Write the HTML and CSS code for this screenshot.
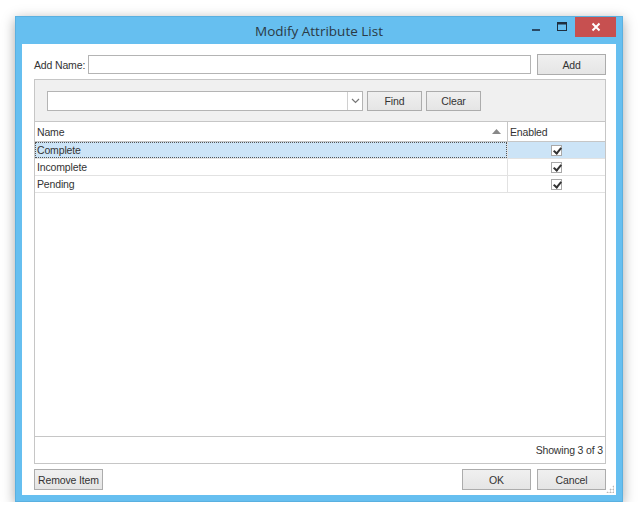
FILE: index.html
```html
<!DOCTYPE html>
<html>
<head>
<meta charset="utf-8">
<link rel="stylesheet" href="styles.css">
</head>
<body>
<div class="window">
  <div class="titlebar">
    <div class="title">Modify Attribute List</div>
    <div class="controls">
      <div class="ctl min"><svg width="12" height="12" viewBox="0 0 12 12"><rect x="2" y="8" width="8" height="2" fill="#2a4a66"/></svg></div>
      <div class="ctl max"><svg width="12" height="12" viewBox="0 0 12 12"><rect x="1.5" y="1.5" width="9" height="8" fill="none" stroke="#1f2f3f" stroke-width="1"/><rect x="1.5" y="1.5" width="9" height="2" fill="#1f2f3f"/></svg></div>
      <div class="ctl close"><svg width="12" height="12" viewBox="0 0 12 12"><path d="M2.5 2.5 L9.5 9.5 M9.5 2.5 L2.5 9.5" stroke="#fff" stroke-width="2"/></svg></div>
    </div>
  </div>
  <div class="content">
    <div class="addrow">
      <span class="label">Add Name:</span>
      <div class="textbox name-box"></div>
      <div class="btn add">Add</div>
    </div>
    <div class="panel">
      <div class="search">
        <div class="combo">
          <div class="combo-field"></div>
          <div class="combo-btn"><svg width="9" height="6" viewBox="0 0 9 6"><path d="M1 1 L4.5 4.5 L8 1" fill="none" stroke="#777" stroke-width="1.2"/></svg></div>
        </div>
        <div class="btn find">Find</div>
        <div class="btn clear">Clear</div>
      </div>
      <div class="grid">
        <div class="row header">
          <div class="cell name">Name<svg class="sort" width="9" height="5" viewBox="0 0 9 5"><path d="M0 5 L4.5 0 L9 5 Z" fill="#888"/></svg></div>
          <div class="cell enabled">Enabled</div>
        </div>
        <div class="row selected">
          <div class="cell name"><span class="focus">Complete</span></div>
          <div class="cell enabled"><span class="check"></span></div>
        </div>
        <div class="row">
          <div class="cell name">Incomplete</div>
          <div class="cell enabled"><span class="check"></span></div>
        </div>
        <div class="row">
          <div class="cell name">Pending</div>
          <div class="cell enabled"><span class="check"></span></div>
        </div>
      </div>
      <div class="footer">Showing 3 of 3</div>
    </div>
    <div class="bottom">
      <div class="btn remove">Remove Item</div>
      <div class="spacer"></div>
      <div class="btn ok">OK</div>
      <div class="btn cancel">Cancel</div>
    </div>
    <div class="grip"></div>
  </div>
</div>
</body>
</html>
```
FILE: styles.css
```css
html, body {
  margin: 0;
  padding: 0;
  background: #ffffff;
}
body {
  font-family: "Liberation Sans", Arial, sans-serif;
  font-size: 10.5px;
  letter-spacing: -0.15px;
  color: #333;
  padding: 16px 0 0 15px;
}
.window {
  width: 608px;
  height: 486px;
  box-sizing: border-box;
  background: #66bff0;
  border: 1px solid #5ab0e0;
  padding: 0 6px 6px 6px;
  display: flex;
  flex-direction: column;
  box-shadow: 0 3px 12px rgba(0,0,0,0.35);
}
.titlebar {
  height: 27px;
  position: relative;
  display: flex;
  justify-content: center;
  align-items: center;
  flex: none;
}
.title {
  font-family: "Open Sans", "Liberation Sans", sans-serif;
  font-size: 13.5px;
  letter-spacing: 0;
  color: #2b3a45;
  padding-top: 1px;
}
.controls {
  position: absolute;
  right: 0;
  top: 0;
  display: flex;
  height: 20px;
}
.ctl {
  display: flex;
  align-items: center;
  justify-content: center;
  height: 20px;
}
.min { width: 26px; }
.max { width: 26px; }
.close {
  width: 41px;
  background: #c75050;
}
.content {
  flex: 1;
  background: #fff;
  position: relative;
  padding: 10px 10px 0 12px;
  display: flex;
  flex-direction: column;
}
.addrow {
  display: flex;
  align-items: center;
  height: 21px;
}
.label {
  width: 54px;
  flex: none;
  white-space: nowrap;
  color: #333;
}
.textbox {
  border: 1px solid #b4b4b4;
  background: #fff;
  box-sizing: border-box;
}
.name-box {
  width: 443px;
  flex: none;
  height: 19px;
  margin-right: 6px;
}
.btn {
  box-sizing: border-box;
  height: 21px;
  flex: none;
  border: 1px solid #acacac;
  background: linear-gradient(#f0f0f0, #e5e5e5);
  display: flex;
  align-items: center;
  justify-content: center;
  color: #333;
}
.add { width: 69px; }
.panel {
  margin-top: 4px;
  width: 572px;
  height: 385px;
  box-sizing: border-box;
  border: 1px solid #c6c6c6;
  display: flex;
  flex-direction: column;
}
.search {
  height: 42px;
  background: #f0f0f0;
  border-bottom: 1px solid #c6c6c6;
  display: flex;
  align-items: flex-start;
  padding: 11px 0 0 12px;
  box-sizing: border-box;
  flex: none;
}
.combo {
  display: flex;
  width: 316px;
  height: 20px;
  box-sizing: border-box;
  border: 1px solid #b4b4b4;
  background: #fff;
  margin-right: 4px;
}
.combo-field { flex: 1; }
.combo-btn {
  width: 14px;
  border-left: 1px solid #d0d0d0;
  display: flex;
  align-items: center;
  justify-content: center;
}
.find { width: 55px; height: 20px; margin-right: 4px; }
.clear { width: 55px; height: 20px; }
.grid {
  flex: 1;
  background: #fff;
}
.row {
  display: flex;
  height: 17px;
  box-sizing: border-box;
  border-bottom: 1px solid #e2e2e2;
}
.row.header {
  height: 20px;
  border-bottom: 1px solid #c6c6c6;
}
.cell {
  display: flex;
  align-items: center;
  box-sizing: border-box;
  position: relative;
}
.cell.name {
  width: 473px;
  padding-left: 2px;
  border-right: 1px solid #e2e2e2;
}
.header .cell.name { border-right: 1px solid #c6c6c6; }
.cell.enabled {
  flex: 1;
  justify-content: center;
}
.header .cell.enabled {
  justify-content: flex-start;
  padding-left: 2px;
}
.sort {
  position: absolute;
  right: 6px;
  top: 7px;
}
.selected { background: #cce4f7; }
.selected .cell.name { padding-left: 0; }
.focus {
  display: flex;
  align-items: center;
  width: 100%;
  height: 100%;
  box-sizing: border-box;
  border: 1px dotted #555;
  padding-left: 1px;
}
.check {
  width: 11px;
  height: 11px;
  box-sizing: border-box;
  border: 1px solid #a8a8a8;
  background: #fff;
  position: relative;
}
.check::after {
  content: "";
  position: absolute;
  left: 3px;
  top: 0px;
  width: 3px;
  height: 6px;
  border-right: 2px solid #333;
  border-bottom: 2px solid #333;
  transform: rotate(40deg);
}
.footer {
  height: 27px;
  flex: none;
  border-top: 1px solid #c6c6c6;
  box-sizing: border-box;
  display: flex;
  align-items: center;
  justify-content: flex-end;
  padding-right: 2px;
}
.bottom {
  margin-top: 5px;
  display: flex;
  width: 572px;
  gap: 6px;
}
.spacer { flex: 1; }
.remove { width: 69px; }
.ok { width: 69px; }
.cancel { width: 69px; }
.grip {
  position: absolute;
  right: 2px;
  bottom: 2px;
  width: 8px;
  height: 8px;
  background:
    radial-gradient(circle, #b8b8b8 0.9px, transparent 1.1px) 0 0 / 3px 3px;
  clip-path: polygon(100% 0, 100% 100%, 0 100%);
}
```
